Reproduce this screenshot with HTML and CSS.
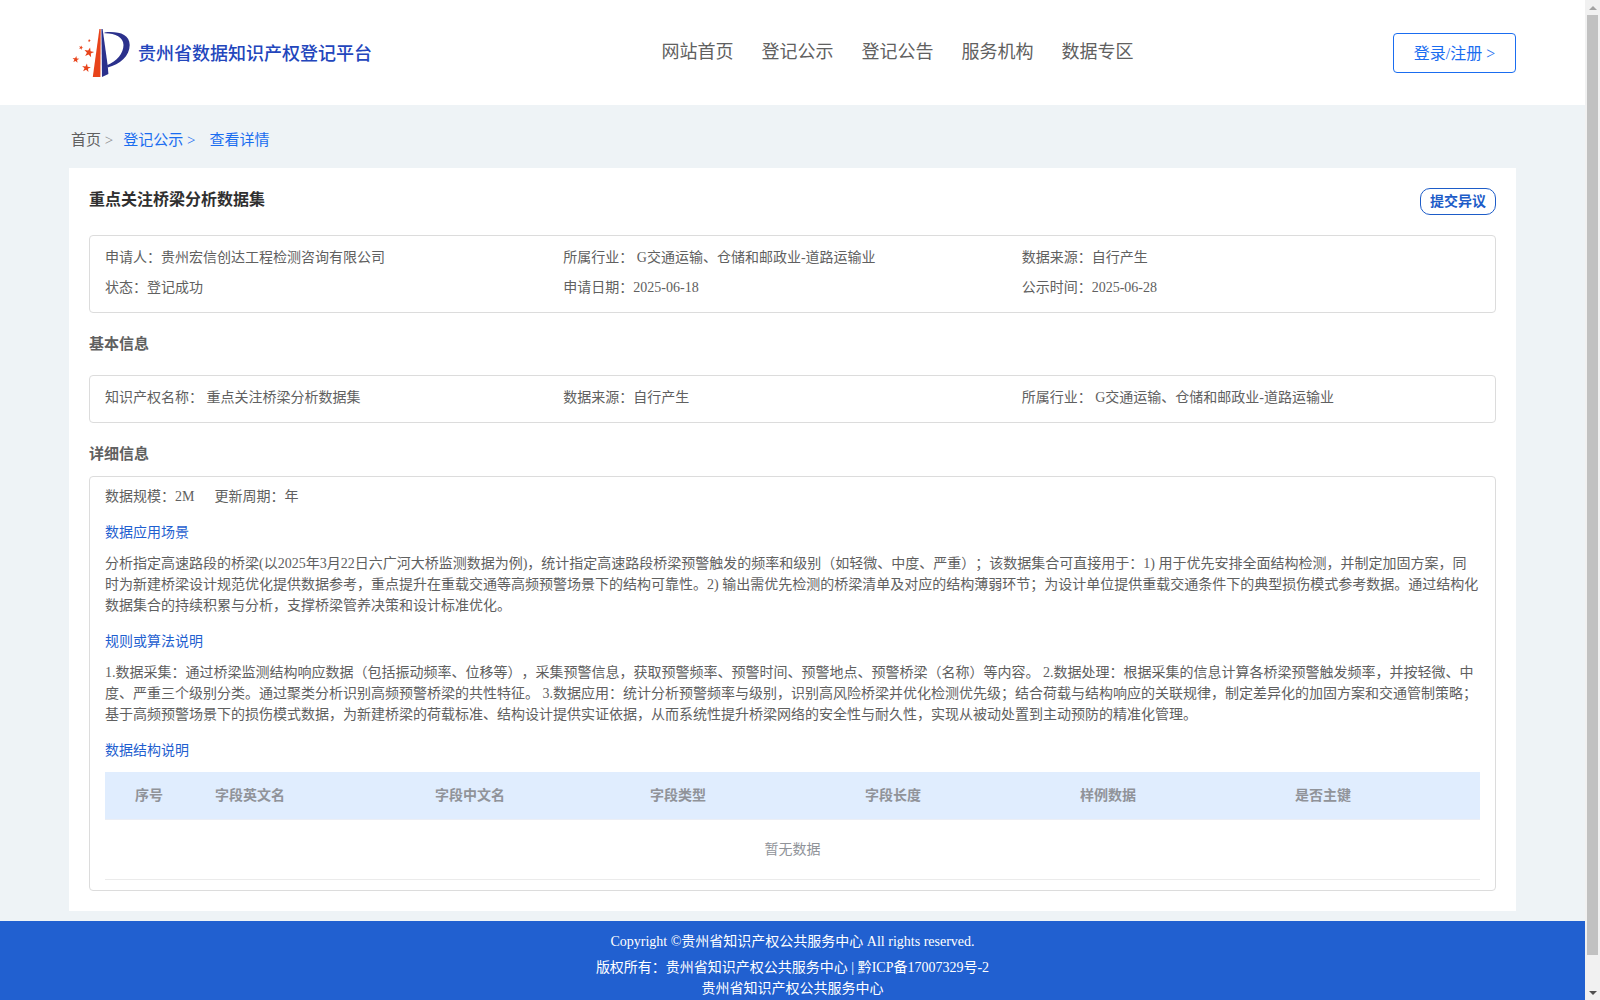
FILE: index.html
```html
<!DOCTYPE html>
<html lang="zh-CN">
<head>
<meta charset="utf-8">
<title>贵州省数据知识产权登记平台</title>
<link rel="stylesheet" href="styles.css">
</head>
<body>
<div class="viewport">
  <header class="header">
    <a class="brand" href="#">
      <svg class="brand-logo" viewBox="0 0 58 50" aria-hidden="true">
        <defs>
          <path id="star" d="M0-10 2.4-3.2 9.5-3.1 3.8 1.2 5.9 8.1 0 4-5.9 8.1-3.8 1.2-9.5-3.1-2.4-3.2z"/>
        </defs>
        <path fill="#e8431a" d="M27.4 1h1.3l-.3 48h-7.6z"/>
        <path fill="#2b318c" d="M29.4 1h1.2l5.1 36.5.7 8.5-6.4 3z"/>
        <path fill="#2b318c" d="M32.5 4.4C46 3 57.7 6 57.7 17c0 11-10 19.5-22 22.5l-.7-2.3c10-4 16.500-12 16.500-20.200C51.500 9 43 5 32.500 5.200z"/>
        <g fill="#e8431a">
          <use href="#star" transform="translate(17 24.500) rotate(12) scale(.52)"/>
          <use href="#star" transform="translate(3.800 31.500) rotate(8) scale(.36)"/>
          <use href="#star" transform="translate(14.300 40) rotate(8) scale(.46)"/>
          <use href="#star" transform="translate(9 19.700) rotate(20) scale(.23)"/>
          <use href="#star" transform="translate(17.300 12.700) rotate(20) scale(.17)"/>
        </g>
      </svg>
      <span class="brand-name">贵州省数据知识产权登记平台</span>
    </a>
    <nav class="nav">
      <a href="#">网站首页</a>
      <a href="#">登记公示</a>
      <a href="#">登记公告</a>
      <a href="#">服务机构</a>
      <a href="#">数据专区</a>
    </nav>
    <button class="login" type="button">登录/注册 &gt;</button>
  </header>

  <main class="main">
    <nav class="crumbs">
      <a class="crumb-home" href="#">首页 <span class="sep">&gt;</span></a>
      <a href="#">登记公示 &gt;</a>
      <a class="crumb-last" href="#">查看详情</a>
    </nav>

    <article class="card">
      <div class="card-head">
        <h1 class="card-title">重点关注桥梁分析数据集</h1>
        <button class="objection" type="button">提交异议</button>
      </div>

      <div class="box facts">
        <div>申请人：贵州宏信创达工程检测咨询有限公司</div>
        <div>所属行业： G交通运输、仓储和邮政业-道路运输业</div>
        <div>数据来源：自行产生</div>
        <div>状态：登记成功</div>
        <div>申请日期：2025-06-18</div>
        <div>公示时间：2025-06-28</div>
      </div>

      <h2 class="section-title">基本信息</h2>
      <div class="box facts">
        <div>知识产权名称： 重点关注桥梁分析数据集</div>
        <div>数据来源：自行产生</div>
        <div>所属行业： G交通运输、仓储和邮政业-道路运输业</div>
      </div>

      <h2 class="section-title section-title-tight">详细信息</h2>
      <div class="box details">
        <div class="meta"><span>数据规模：2M</span><span>更新周期：年</span></div>

        <h3 class="sub-title">数据应用场景</h3>
        <p class="text">分析指定高速路段的桥梁(以2025年3月22日六广河大桥监测数据为例)，统计指定高速路段桥梁预警触发的频率和级别（如轻微、中度、严重）；该数据集合可直接用于：1) 用于优先安排全面结构检测，并制定加固方案，同时为新建桥梁设计规范优化提供数据参考，重点提升在重载交通等高频预警场景下的结构可靠性。2) 输出需优先检测的桥梁清单及对应的结构薄弱环节；为设计单位提供重载交通条件下的典型损伤模式参考数据。通过结构化数据集合的持续积累与分析，支撑桥梁管养决策和设计标准优化。</p>

        <h3 class="sub-title">规则或算法说明</h3>
        <p class="text">1.数据采集：通过桥梁监测结构响应数据（包括振动频率、位移等），采集预警信息，获取预警频率、预警时间、预警地点、预警桥梁（名称）等内容。 2.数据处理：根据采集的信息计算各桥梁预警触发频率，并按轻微、中度、严重三个级别分类。通过聚类分析识别高频预警桥梁的共性特征。 3.数据应用：统计分析预警频率与级别，识别高风险桥梁并优化检测优先级；结合荷载与结构响应的关联规律，制定差异化的加固方案和交通管制策略；基于高频预警场景下的损伤模式数据，为新建桥梁的荷载标准、结构设计提供实证依据，从而系统性提升桥梁网络的安全性与耐久性，实现从被动处置到主动预防的精准化管理。</p>

        <h3 class="sub-title">数据结构说明</h3>
        <table class="fields">
          <colgroup>
            <col class="col-index"><col class="col-en"><col class="col-std"><col class="col-std"><col class="col-std"><col class="col-std"><col>
          </colgroup>
          <thead>
            <tr><th>序号</th><th>字段英文名</th><th>字段中文名</th><th>字段类型</th><th>字段长度</th><th>样例数据</th><th>是否主键</th></tr>
          </thead>
          <tbody>
            <tr><td colspan="7">暂无数据</td></tr>
          </tbody>
        </table>
      </div>
    </article>
  </main>

  <footer class="footer">
    <p class="copyright">Copyright ©贵州省知识产权公共服务中心 All rights reserved.</p>
    <p>版权所有：贵州省知识产权公共服务中心 | 黔ICP备17007329号-2</p>
    <p>贵州省知识产权公共服务中心</p>
  </footer>
</div>
<div class="scrollbar" aria-hidden="true">
  <span class="arrow arrow-up"></span>
  <span class="thumb"></span>
  <span class="arrow arrow-down"></span>
</div>
</body>
</html>
```
FILE: styles.css
```css
* {
  box-sizing: border-box;
}

body {
  display: flex;
  height: 100vh;
  margin: 0;
  overflow: hidden;
  font: 14px/21px "Liberation Serif", "Noto Sans CJK SC", serif;
  color: #606060;
  background: #eef3f6;
  text-spacing-trim: space-all;
}

h1, h2, h3, p {
  margin: 0;
}

a {
  color: inherit;
  text-decoration: none;
}

button {
  font-family: inherit;
  background: #fff;
  cursor: pointer;
}

.viewport {
  flex: 1;
  min-width: 0;
  overflow-y: auto;
  scrollbar-width: none;
}

/* Header */
.header {
  display: grid;
  grid-template-columns: 1fr auto 1fr;
  align-items: center;
  height: 105px;
  padding: 0 69px;
  background: #fff;
}

.brand {
  display: flex;
  align-items: center;
  gap: 8px;
  padding-left: 3px;
  font-size: 18px;
  line-height: 24px;
  font-weight: 500;
  color: #2346bc;
}

.brand-logo {
  width: 58px;
  height: 50px;
}

.brand-name {
  padding-top: 3px;
}

.nav {
  display: flex;
  gap: 28px;
  padding: 0 0 2px 210px;
  font-size: 18px;
  line-height: 26px;
}

.login {
  justify-self: end;
  width: 123px;
  height: 40px;
  padding: 0 0 2px;
  border: 1px solid #1a6df0;
  border-radius: 4px;
  font-size: 16px;
  color: #1a6df0;
}

/* Content */
.main {
  padding: 0 69px 10px;
}

.crumbs {
  display: flex;
  gap: 10px;
  padding: 24px 2px 17px;
  font-size: 15px;
  line-height: 22px;
  color: #1a6df0;
}

.crumb-home {
  color: #606060;
}

.sep {
  color: #8c8c8c;
}

.crumb-last {
  padding-left: 4px;
}

.card {
  padding: 20px;
  background: #fff;
}

.card-head {
  display: flex;
  justify-content: space-between;
  align-items: flex-start;
  margin-bottom: 20px;
}

.card-title {
  font-size: 16px;
  line-height: 24px;
  color: #303030;
}

.objection {
  width: 76px;
  height: 27px;
  padding: 0;
  border: 1px solid #1d5cc8;
  border-radius: 10px;
  font-size: 14px;
  font-weight: 700;
  line-height: 21px;
  color: #1d5cc8;
}

.box {
  border: 1px solid #dcdcdc;
  border-radius: 4px;
}

.facts {
  display: grid;
  grid-template-columns: repeat(3, 1fr);
  padding: 7px 15px 9px;
  line-height: 30px;
}

.section-title {
  margin: 20px 0;
  font-size: 15px;
  line-height: 22px;
}

.section-title-tight {
  margin-bottom: 11px;
}

.details {
  padding: 9px 15px 10px;
}

.meta {
  display: flex;
  gap: 20px;
}

.sub-title {
  margin: 15px 0 10px;
  font-size: 14px;
  font-weight: 400;
  line-height: 21px;
  color: #1f5fd0;
}

.fields {
  width: 100%;
  margin-top: 11px;
  border-collapse: separate;
  border-spacing: 0;
  table-layout: fixed;
  color: #909399;
}

.col-index {
  width: 100px;
}

.col-en {
  width: 220px;
}

.col-std {
  width: 215px;
}

.fields th {
  height: 48px;
  padding: 0 10px;
  border-bottom: 1px solid #ebeef5;
  text-align: left;
  background: #e0edfe;
}

.fields th:first-child {
  padding-left: 30px;
}

.fields td {
  height: 60px;
  padding: 0;
  border-bottom: 1px solid #ebebeb;
  text-align: center;
}

/* Footer */
.footer {
  padding: 10px 0 34px;
  text-align: center;
  color: #fff;
  background: #2160d0;
}

.copyright {
  margin-bottom: 5px;
}

/* Page scrollbar */
.scrollbar {
  display: flex;
  flex-direction: column;
  align-items: center;
  width: 15px;
  background: #f1f1f1;
}

.arrow {
  display: flex;
  justify-content: center;
  align-items: center;
  width: 15px;
  height: 15px;
}

.arrow::before {
  content: "";
  border: 4px solid transparent;
}

.arrow-up::before {
  border-top: 0;
  border-bottom-color: #a3a3a3;
}

.arrow-down::before {
  border-bottom: 0;
  border-top-color: #505050;
}

.thumb {
  width: 11px;
  height: 94%;
  margin-bottom: auto;
  background: #c1c1c1;
}
```
